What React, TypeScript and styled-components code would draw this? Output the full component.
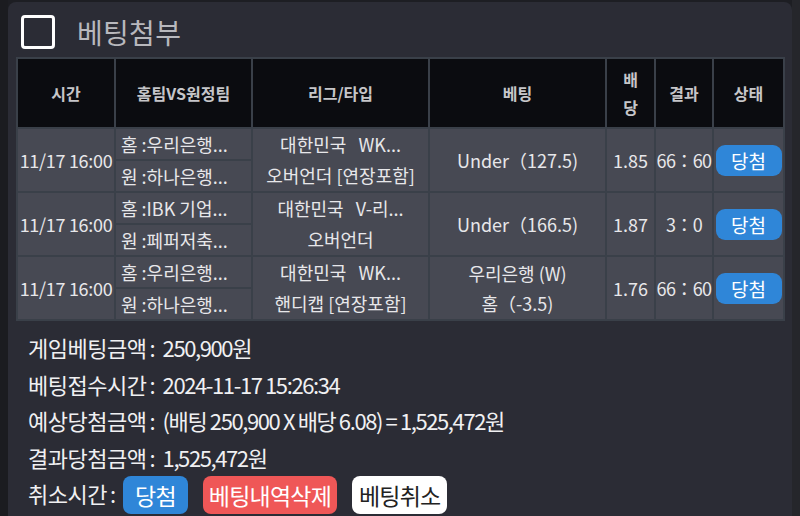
import React from "react";
import styled, { createGlobalStyle } from "styled-components";

const Global = createGlobalStyle`
  html, body { margin: 0; padding: 0; background: #1d1e23; }
  body { font-family: "Noto Sans CJK KR", "Noto Sans", sans-serif; }
  * { box-sizing: border-box; }
`;

const Page = styled.div`
  width: 800px;
  height: 516px;
  overflow: hidden;
  padding: 2px 8px 0 8px;
  background: linear-gradient(to right, #1b1c20 0 8px, #1d1e23 8px 792px, #25262b 792px);
`;

const Panel = styled.div`
  width: 784px;
  height: 100%;
  background: #2b2c35;
  border-radius: 8px 8px 0 0;
  padding: 0 9px 0 8px;
  overflow: hidden;
`;

const TitleBar = styled.div`
  height: 55px;
  display: flex;
  align-items: center;
  gap: 22px;
  padding-left: 5px;
`;

const CheckBox = styled.div`
  width: 34px;
  height: 34px;
  border: 3px solid #ffffff;
  border-radius: 4px;
  margin-top: 4px;
`;

const Title = styled.div`
  font-size: 28px;
  color: #b8b8bd;
  letter-spacing: 0.3px;
  line-height: 1;
  margin-top: 4px;
`;

const Table = styled.table`
  width: 767px;
  table-layout: fixed;
  border-collapse: collapse;
  color: #e7e7ea;
`;

const HeadRow = styled.tr`
  height: 70px;
`;

const SubRow = styled.tr`
  height: 31.2px;
`;

const Th = styled.th`
  background: #0b0c10;
  border: 2px solid #3a4049;
  font-size: 16px;
  font-weight: 700;
  color: #c6c6c9;
  line-height: 28px;
  padding: 0;
`;

const Td = styled.td`
  background: #474953;
  border: 2px solid #3a4049;
  padding: 0;
  font-size: 18px;
  text-align: center;
  white-space: nowrap;
  overflow: hidden;
  line-height: 28px;
`;

const TeamTd = styled(Td)`
  padding-left: 5px;
  text-align: left;
`;

const Tight = styled.span<{ $ls: number }>`
  letter-spacing: ${(p) => p.$ls}px;
`;

const Lines = styled.div<{ $lh: number }>`
  display: flex;
  flex-direction: column;
  line-height: ${(p) => p.$lh}px;
`;

const Badge = styled.div`
  width: 66px;
  height: 31px;
  margin: 0 auto;
  border-radius: 9px;
  background: #2f86d8;
  color: #fff;
  font-size: 19px;
  line-height: 31px;
  text-align: center;
`;

const Summary = styled.div`
  padding: 8px 0 0 12px;
  color: #f0f0f2;
  font-size: 22px;
`;

const Line = styled.div`
  height: 36.6px;
  line-height: 36.6px;
  display: flex;
  align-items: center;
  white-space: pre;
`;

const Label = styled.span`
  letter-spacing: -0.5px;
`;

const Colon = styled.span`
  margin: 0 7px 0 3px;
`;

const Value = styled.span`
  letter-spacing: -1.4px;
`;

const Btn = styled.div<{ $bg: string; $fg: string; $px: number }>`
  height: 38px;
  line-height: 38px;
  padding: 0 ${(p) => p.$px}px;
  border-radius: 8px;
  background: ${(p) => p.$bg};
  color: ${(p) => p.$fg};
  font-size: 23px;
  letter-spacing: -0.8px;
  margin-top: 3px;
`;

const BtnRow = styled.div`
  display: flex;
  gap: 15px;
  margin-left: 0;
`;

type Row = {
  home: string;
  away: string;
  league: string[];
  bet: string[];
  odds: string;
  score: string;
};

const rows: Row[] = [
  {
    home: "홈 :우리은행...",
    away: "원 :하나은행...",
    league: ["대한민국\u00a0\u00a0\u00a0WK...", "오버언더 [연장포함]"],
    bet: ["Under（127.5)"],
    odds: "1.85",
    score: "66：60",
  },
  {
    home: "홈 :IBK 기업...",
    away: "원 :페퍼저축...",
    league: ["대한민국\u00a0\u00a0\u00a0V-리...", "오버언더"],
    bet: ["Under（166.5)"],
    odds: "1.87",
    score: "3：0",
  },
  {
    home: "홈 :우리은행...",
    away: "원 :하나은행...",
    league: ["대한민국\u00a0\u00a0\u00a0WK...", "핸디캡 [연장포함]"],
    bet: ["우리은행 (W)", "홈（-3.5)"],
    odds: "1.76",
    score: "66：60",
  },
];

const info: [string, string][] = [
  ["게임베팅금액", "250,900원"],
  ["베팅접수시간", "2024-11-17 15:26:34"],
  ["예상당첨금액", "(배팅 250,900 X 배당 6.08) = 1,525,472원"],
  ["결과당첨금액", "1,525,472원"],
];

export default function App() {
  return (
    <>
      <Global />
      <Page>
        <Panel>
          <TitleBar>
            <CheckBox />
            <Title>베팅첨부</Title>
          </TitleBar>
          <Table>
            <colgroup>
              <col style={{ width: 98 }} />
              <col style={{ width: 137 }} />
              <col style={{ width: 177 }} />
              <col style={{ width: 177 }} />
              <col style={{ width: 49 }} />
              <col style={{ width: 58 }} />
              <col style={{ width: 71 }} />
            </colgroup>
            <thead>
              <HeadRow>
                <Th>시간</Th>
                <Th>홈팀VS원정팀</Th>
                <Th>리그/타입</Th>
                <Th>베팅</Th>
                <Th>
                  배<br />당
                </Th>
                <Th>결과</Th>
                <Th>상태</Th>
              </HeadRow>
            </thead>
            <tbody>
              {rows.map((r, i) => (
                <React.Fragment key={i}>
                  <SubRow>
                    <Td rowSpan={2}>
                      <Tight $ls={-0.3}>11/17 16:00</Tight>
                    </Td>
                    <TeamTd>{r.home}</TeamTd>
                    <Td rowSpan={2}>
                      <Lines $lh={31}>
                        {r.league.map((l) => (
                          <span key={l}>{l}</span>
                        ))}
                      </Lines>
                    </Td>
                    <Td rowSpan={2}>
                      <Lines $lh={30}>
                        {r.bet.map((b) => (
                          <span key={b}>{b}</span>
                        ))}
                      </Lines>
                    </Td>
                    <Td rowSpan={2}>{r.odds}</Td>
                    <Td rowSpan={2}>
                      <Tight $ls={-0.6}>{r.score}</Tight>
                    </Td>
                    <Td rowSpan={2}>
                      <Badge>당첨</Badge>
                    </Td>
                  </SubRow>
                  <SubRow>
                    <TeamTd>{r.away}</TeamTd>
                  </SubRow>
                </React.Fragment>
              ))}
            </tbody>
          </Table>
          <Summary>
            {info.map(([k, v]) => (
              <Line key={k}>
                <Label>{k}</Label>
                <Colon>:</Colon>
                <Value>{v}</Value>
              </Line>
            ))}
            <Line>
              <Label>취소시간</Label>
              <Colon>:</Colon>
              <BtnRow>
                <Btn $bg="#2f86d8" $fg="#ffffff" $px={12}>당첨</Btn>
                <Btn $bg="#ef5757" $fg="#ffffff" $px={6}>베팅내역삭제</Btn>
                <Btn $bg="#ffffff" $fg="#222222" $px={7}>베팅취소</Btn>
              </BtnRow>
            </Line>
          </Summary>
        </Panel>
      </Page>
    </>
  );
}
